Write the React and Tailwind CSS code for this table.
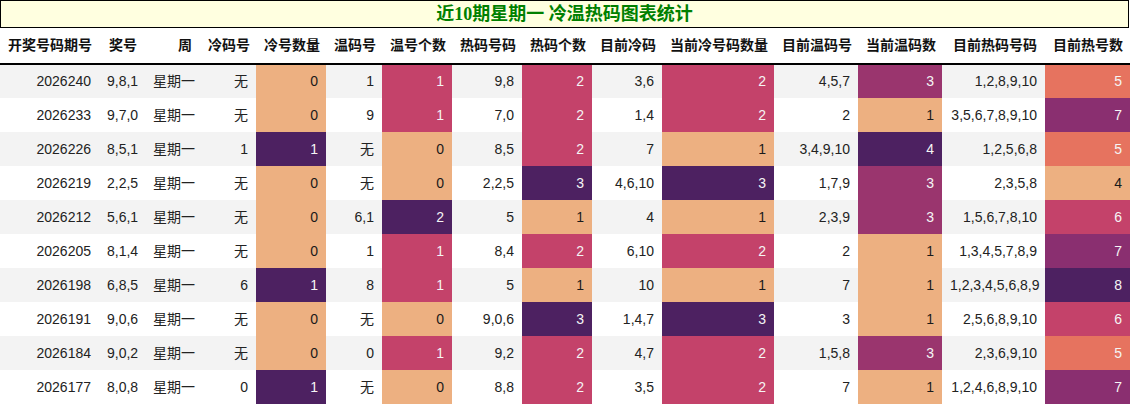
import React from "react";

// 颜色 (flare 渐变)
const C0 = "bg-[#edb081] text-[#1a1a1a]";
const C25 = "bg-[#e6735f] text-[#f5f5f5]";
const C50 = "bg-[#c4426a] text-[#f5f5f5]";
const C67 = "bg-[#9a356e] text-[#f5f5f5]";
const C75 = "bg-[#8a2f70] text-[#f5f5f5]";
const C100 = "bg-[#4d2161] text-[#f5f5f5]";

const COLS = [
  { t: "开奖号码期号", w: 99 },
  { t: "奖号", w: 46 },
  { t: "周", w: 55 },
  { t: "冷码号", w: 56 },
  { t: "冷号数量", w: 70 },
  { t: "温码号", w: 56 },
  { t: "温号个数", w: 70 },
  { t: "热码号码", w: 70 },
  { t: "热码个数", w: 70 },
  { t: "目前冷码", w: 70 },
  { t: "当前冷号码数量", w: 112 },
  { t: "目前温码号", w: 84 },
  { t: "当前温码数", w: 84 },
  { t: "目前热码号码", w: 103 },
  { t: "目前热号数", w: 85 },
];

const ROWS = [
  ["2026240", "9,8,1", "星期一", "无", 0, "1", 1, "9,8", 2, "3,6", 2, "4,5,7", 3, "1,2,8,9,10", 5],
  ["2026233", "9,7,0", "星期一", "无", 0, "9", 1, "7,0", 2, "1,4", 2, "2", 1, "3,5,6,7,8,9,10", 7],
  ["2026226", "8,5,1", "星期一", "1", 1, "无", 0, "8,5", 2, "7", 1, "3,4,9,10", 4, "1,2,5,6,8", 5],
  ["2026219", "2,2,5", "星期一", "无", 0, "无", 0, "2,2,5", 3, "4,6,10", 3, "1,7,9", 3, "2,3,5,8", 4],
  ["2026212", "5,6,1", "星期一", "无", 0, "6,1", 2, "5", 1, "4", 1, "2,3,9", 3, "1,5,6,7,8,10", 6],
  ["2026205", "8,1,4", "星期一", "无", 0, "1", 1, "8,4", 2, "6,10", 2, "2", 1, "1,3,4,5,7,8,9", 7],
  ["2026198", "6,8,5", "星期一", "6", 1, "8", 1, "5", 1, "10", 1, "7", 1, "1,2,3,4,5,6,8,9", 8],
  ["2026191", "9,0,6", "星期一", "无", 0, "无", 0, "9,0,6", 3, "1,4,7", 3, "3", 1, "2,5,6,8,9,10", 6],
  ["2026184", "9,0,2", "星期一", "无", 0, "0", 1, "9,2", 2, "4,7", 2, "1,5,8", 3, "2,3,6,9,10", 5],
  ["2026177", "8,0,8", "星期一", "0", 1, "无", 0, "8,8", 2, "3,5", 2, "7", 1, "1,2,4,6,8,9,10", 7],
];

// 每列的颜色映射 (按列最小/最大值归一化)
const MAPS = {
  4: { 0: C0, 1: C100 },
  6: { 0: C0, 1: C50, 2: C100 },
  8: { 1: C0, 2: C50, 3: C100 },
  10: { 1: C0, 2: C50, 3: C100 },
  12: { 1: C0, 3: C67, 4: C100 },
  14: { 4: C0, 5: C25, 6: C50, 7: C75, 8: C100 },
};

export default function App() {
  return (
    <div
      className="w-[1130px] bg-white text-[#222]"
      style={{ fontFamily: '"Liberation Sans", "Noto Sans CJK SC", sans-serif' }}
    >
      {/* 标题 */}
      <div className="h-[28px] w-[1129px] border border-black bg-[#ffffe0] flex items-center justify-center">
        <span
          className="text-[18px] font-bold text-[#008000] leading-none"
          style={{ fontFamily: '"Liberation Serif", "Noto Sans CJK SC", serif' }}
        >
          近10期星期一 冷温热码图表统计
        </span>
      </div>

      {/* 表格 */}
      <table className="table-fixed border-collapse w-[1130px] text-[14px]">
        <colgroup>
          {COLS.map((c) => (
            <col key={c.t} style={{ width: c.w }} />
          ))}
        </colgroup>
        <thead>
          <tr className="h-[36px] border-b-2 border-black">
            {COLS.map((c) => (
              <th key={c.t} className="px-2 text-right font-bold text-[#111] whitespace-nowrap">
                {c.t}
              </th>
            ))}
          </tr>
        </thead>
        <tbody>
          {ROWS.map((r, i) => (
            <tr key={r[0]} className={"h-[34px] " + (i % 2 === 0 ? "bg-[#f3f3f3]" : "bg-white")}>
              {r.map((v, j) => (
                <td
                  key={j}
                  className={"px-2 text-right whitespace-nowrap " + (MAPS[j] ? MAPS[j][v] : "")}
                >
                  {v}
                </td>
              ))}
            </tr>
          ))}
        </tbody>
      </table>
    </div>
  );
}
